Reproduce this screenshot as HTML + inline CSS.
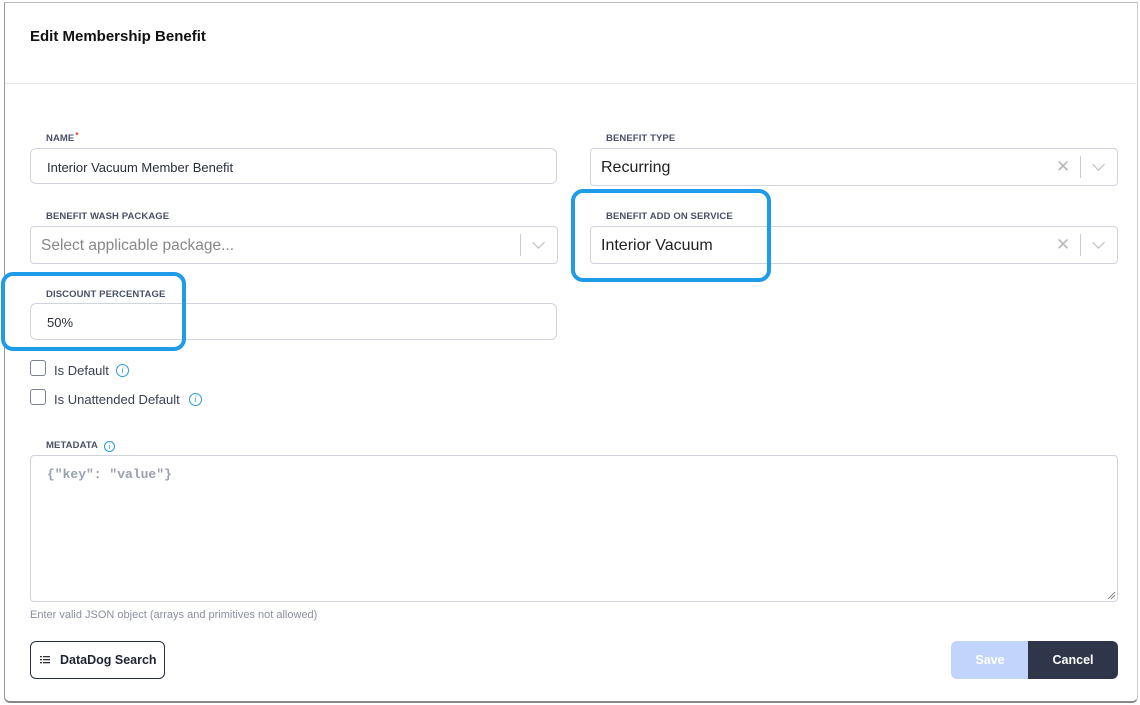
<!DOCTYPE html>
<html><head><meta charset="utf-8"><style>
*{box-sizing:border-box;margin:0;padding:0}
body{width:1140px;height:705px;background:#fff;position:relative;overflow:hidden;font-family:"Liberation Sans",sans-serif;color:#1f2433}
.modal{position:absolute;left:4px;top:2px;width:1134px;height:701px;background:#fff;border-left:1px solid #999;border-bottom:2px solid #888;border-top:1px solid #bbb;border-right:1px solid #ccc;border-radius:0 0 6px 6px}
.abs{position:absolute}
.title{left:30px;top:28px;font-size:15px;font-weight:bold;color:#111}
.hr{left:5px;right:0;top:83px;height:1px;background:#e4e6ea;width:1133px}
.lbl{font-size:9.5px;font-weight:bold;color:#4a5068;letter-spacing:.1px}
.inp{border:1px solid #d0d4de;border-radius:6px;background:#fff}
.t13{font-size:13px;color:#2a2f3f}
.t16{font-size:16px;color:#222}
.x{color:#b8b8b8;font-size:17px}
.sep{width:1px;height:22px;background:#ccc}
.chev{width:9px;height:9px;border-right:1.5px solid #bbb;border-bottom:1.5px solid #bbb;transform:rotate(45deg)}
.cb{width:16px;height:16px;border:1px solid #7b8196;border-radius:3px}
.info{width:13px;height:13px;border:1px solid #2a9be0;border-radius:50%;color:#2a9be0;font-size:9px;font-style:italic;text-align:center;line-height:11px;font-family:"Liberation Serif",serif}
.hl{border:4px solid #1e9be9;border-radius:12px}
</style></head><body>
<div class="modal"></div>
<div class="abs title">Edit Membership Benefit</div>
<div class="abs hr"></div>

<div class="abs lbl" style="left:46px;top:133px">NAME<span style="color:#e33;font-size:8px;position:relative;top:-3px;margin-left:1px">*</span></div>
<div class="abs inp" style="left:30px;top:148px;width:527px;height:36px"></div>
<div class="abs t13" style="left:47px;top:160px">Interior Vacuum Member Benefit</div>

<div class="abs lbl" style="left:606px;top:133px">BENEFIT TYPE</div>
<div class="abs inp" style="left:590px;top:148px;width:528px;height:38px;border-radius:4px"></div>
<div class="abs t16" style="left:601px;top:159px">Recurring</div>
<div class="abs x" style="left:1056px;top:157px">✕</div>
<div class="abs sep" style="left:1080px;top:156px"></div>
<div class="abs chev" style="left:1094px;top:160px"></div>

<div class="abs lbl" style="left:46px;top:211px">BENEFIT WASH PACKAGE</div>
<div class="abs inp" style="left:30px;top:226px;width:528px;height:38px;border-radius:4px"></div>
<div class="abs" style="left:41px;top:237px;color:#888;font-size:15.5px">Select applicable package...</div>
<div class="abs sep" style="left:520px;top:234px"></div>
<div class="abs chev" style="left:534px;top:238px"></div>

<div class="abs lbl" style="left:606px;top:211px">BENEFIT ADD ON SERVICE</div>
<div class="abs inp" style="left:590px;top:226px;width:528px;height:38px;border-radius:4px"></div>
<div class="abs t16" style="left:601px;top:237px">Interior Vacuum</div>
<div class="abs x" style="left:1056px;top:235px">✕</div>
<div class="abs sep" style="left:1080px;top:234px"></div>
<div class="abs chev" style="left:1094px;top:238px"></div>

<div class="abs lbl" style="left:46px;top:289px">DISCOUNT PERCENTAGE</div>
<div class="abs inp" style="left:30px;top:303px;width:527px;height:37px"></div>
<div class="abs t13" style="left:47px;top:315px">50%</div>

<div class="abs cb" style="left:30px;top:360px"></div>
<div class="abs t13" style="left:54px;top:363px;color:#3a4055">Is Default</div>
<div class="abs info" style="left:116px;top:364px">i</div>
<div class="abs cb" style="left:30px;top:389px"></div>
<div class="abs t13" style="left:54px;top:392px;color:#3a4055">Is Unattended Default</div>
<div class="abs info" style="left:189px;top:393px">i</div>

<div class="abs lbl" style="left:46px;top:440px">METADATA</div>
<div class="abs info" style="left:104px;top:441px;width:11px;height:11px;font-size:8px;line-height:9px">i</div>
<div class="abs inp" style="left:30px;top:455px;width:1088px;height:147px;border-radius:4px"></div>
<div class="abs" style="left:47px;top:467px;font-family:'Liberation Mono',monospace;font-size:13px;color:#9aa0b0;font-weight:bold">{"key": "value"}</div>
<svg class="abs" style="left:1107px;top:591px" width="9" height="9"><path d="M1 8L8 1M4 8L8 4" stroke="#888" stroke-width="1"/></svg>
<div class="abs" style="left:30px;top:609px;font-size:11px;color:#8a8fa3">Enter valid JSON object (arrays and primitives not allowed)</div>

<div class="abs" style="left:30px;top:641px;width:135px;height:38px;border:1px solid #2a2f3f;border-radius:6px"></div>
<svg class="abs" style="left:40px;top:656px" width="10" height="8"><g fill="#333"><rect x="0" y="0" width="2" height="1.3"/><rect x="3" y="0" width="7" height="1.3"/><rect x="0" y="3" width="2" height="1.3"/><rect x="3" y="3" width="7" height="1.3"/><rect x="0" y="6" width="2" height="1.3"/><rect x="3" y="6" width="7" height="1.3"/></g></svg>
<div class="abs" style="left:60px;top:653px;font-size:12.5px;font-weight:bold;color:#1f2433">DataDog Search</div>

<div class="abs" style="left:951px;top:641px;width:78px;height:38px;background:#c3d4fc;border-radius:6px 0 0 6px;color:#fff;font-weight:bold;font-size:12.5px;text-align:center;line-height:38px">Save</div>
<div class="abs" style="left:1028px;top:641px;width:90px;height:38px;background:#30364a;border-radius:0 6px 6px 0;color:#fff;font-weight:bold;font-size:12.5px;text-align:center;line-height:38px">Cancel</div>

<div class="abs hl" style="left:571px;top:189px;width:200px;height:93px"></div>
<div class="abs hl" style="left:1px;top:272px;width:185px;height:79px"></div>
</body></html>
